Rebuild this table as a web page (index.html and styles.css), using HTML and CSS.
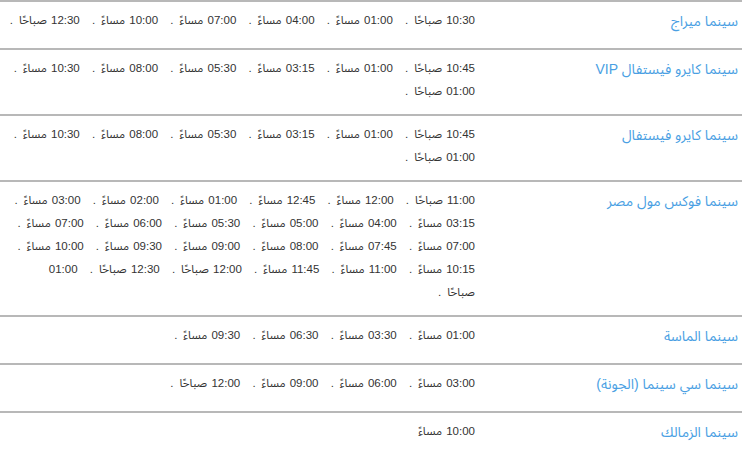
FILE: index.html
```html
<!DOCTYPE html>
<html lang="ar" dir="rtl">
<head>
<meta charset="utf-8">
<link rel="stylesheet" href="styles.css">
</head>
<body>
<table class="showtimes">
  <tr>
    <td class="name"><a href="#">سينما ميراج</a></td>
    <td class="times">10:30 صباحًا<span class="dot">. </span>01:00 مساءً<span class="dot">. </span>04:00 مساءً<span class="dot">. </span>07:00 مساءً<span class="dot">. </span>10:00 مساءً<span class="dot">. </span>12:30 صباحًا<span class="dot">.</span></td>
  </tr>
  <tr>
    <td class="name"><a href="#">سينما كايرو فيستفال VIP</a></td>
    <td class="times">10:45 صباحًا<span class="dot">. </span>01:00 مساءً<span class="dot">. </span>03:15 مساءً<span class="dot">. </span>05:30 مساءً<span class="dot">. </span>08:00 مساءً<span class="dot">. </span>10:30 مساءً<span class="dot">. </span>01:00 صباحًا<span class="dot">.</span></td>
  </tr>
  <tr>
    <td class="name"><a href="#">سينما كايرو فيستفال</a></td>
    <td class="times">10:45 صباحًا<span class="dot">. </span>01:00 مساءً<span class="dot">. </span>03:15 مساءً<span class="dot">. </span>05:30 مساءً<span class="dot">. </span>08:00 مساءً<span class="dot">. </span>10:30 مساءً<span class="dot">. </span>01:00 صباحًا<span class="dot">.</span></td>
  </tr>
  <tr>
    <td class="name"><a href="#">سينما فوكس مول مصر</a></td>
    <td class="times">11:00 صباحًا<span class="dot">. </span>12:00 مساءً<span class="dot">. </span>12:45 مساءً<span class="dot">. </span>01:00 مساءً<span class="dot">. </span>02:00 مساءً<span class="dot">. </span>03:00 مساءً<span class="dot">. </span>03:15 مساءً<span class="dot">. </span>04:00 مساءً<span class="dot">. </span>05:00 مساءً<span class="dot">. </span>05:30 مساءً<span class="dot">. </span>06:00 مساءً<span class="dot">. </span>07:00 مساءً<span class="dot">. </span>07:00 مساءً<span class="dot">. </span>07:45 مساءً<span class="dot">. </span>08:00 مساءً<span class="dot">. </span>09:00 مساءً<span class="dot">. </span>09:30 مساءً<span class="dot">. </span>10:00 مساءً<span class="dot">. </span>10:15 مساءً<span class="dot">. </span>11:00 مساءً<span class="dot">. </span>11:45 مساءً<span class="dot">. </span>12:00 صباحًا<span class="dot">. </span>12:30 صباحًا<span class="dot">. </span><span class="num">01:00</span> <span class="word">صباحًا</span><span class="dot">.</span></td>
  </tr>
  <tr>
    <td class="name"><a href="#">سينما الماسة</a></td>
    <td class="times">01:00 مساءً<span class="dot">. </span>03:30 مساءً<span class="dot">. </span>06:30 مساءً<span class="dot">. </span>09:30 مساءً<span class="dot">.</span></td>
  </tr>
  <tr>
    <td class="name"><a href="#">سينما سي سينما (الجونة)</a></td>
    <td class="times">03:00 مساءً<span class="dot">. </span>06:00 مساءً<span class="dot">. </span>09:00 مساءً<span class="dot">. </span>12:00 صباحًا<span class="dot">.</span></td>
  </tr>
  <tr>
    <td class="name"><a href="#">سينما الزمالك</a></td>
    <td class="times">10:00 مساءً</td>
  </tr>
</table>
</body>
</html>
```

FILE: styles.css
```css
html, body {
  margin: 0;
  padding: 0;
  background: #fff;
}
body {
  font-family: "Liberation Sans", "Noto Sans Arabic", "DejaVu Sans", sans-serif;
}
.showtimes {
  width: 100%;
  border-collapse: collapse;
}
.showtimes td {
  border-top: 2px solid #b8b8b8;
  vertical-align: top;
}
.name {
  width: 263px;
  padding: 8px 4px 15px 0;
  font-size: 14px;
  line-height: 23px;
}
.name a {
  color: #4a9fe3;
  text-decoration: none;
}
.times {
  padding: 7px 0 11px 9px;
  font-size: 11.5px;
  line-height: 23px;
  color: #333;
  word-spacing: 1px;
}
.dot {
  margin-right: 6px;
  word-spacing: 9px;
}
```
